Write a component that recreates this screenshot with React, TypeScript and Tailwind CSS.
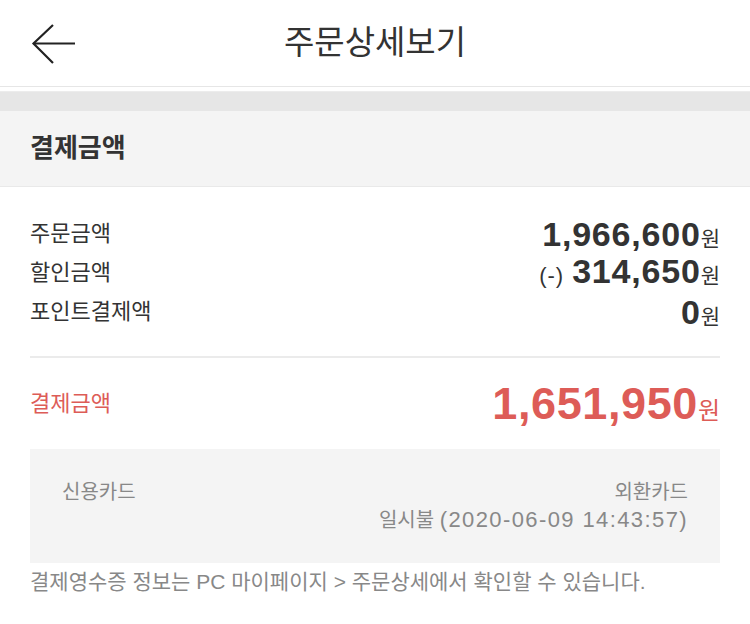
import React from "react";

const font = { fontFamily: '"Liberation Sans", "Noto Sans CJK KR", sans-serif' };

function Row({ label, value, prefix }: { label: string; value: string; prefix?: string }) {
  return (
    <div className="flex h-[39px] items-center justify-between">
      <span className="text-[22px] text-[#333]">{label}</span>
      <span className="flex items-baseline text-[#333]">
        {prefix && <span className="mr-[8px] text-[22px] tracking-[1px]">{prefix}</span>}
        <span className="text-[34px] font-bold leading-none tracking-[0.8px]">{value}</span>
        <span className="text-[21px] leading-none">원</span>
      </span>
    </div>
  );
}

export default function App() {
  return (
    <div className="h-[624px] w-[750px] overflow-hidden bg-white" style={font}>
      <header className="relative flex h-[87px] items-center justify-center border-b border-[#e6e6e6]">
        <svg
          className="absolute left-[31px] top-[23px]"
          width="46"
          height="42"
          viewBox="0 0 46 42"
          fill="none"
          stroke="#222"
          strokeWidth="2.2"
        >
          <path d="M22 2 L2.5 20.5 L22 40" />
          <path d="M2.5 20.5 H44" />
        </svg>
        <h1 className="text-[33px] font-normal text-[#333]">주문상세보기</h1>
      </header>
      <div className="h-[4px] bg-white" />
      <div className="h-[20px] border-t border-[#ececec] bg-[#e6e6e6]" />
      <div className="flex h-[76px] items-center border-b border-[#e9e9e9] bg-[#f4f4f4] px-[30px]">
        <h2 className="text-[26px] font-bold text-[#333]">결제금액</h2>
      </div>
      <div className="px-[30px] pt-[27px]">
        <Row label="주문금액" value="1,966,600" />
        <Row label="할인금액" value="314,650" prefix="(-)" />
        <Row label="포인트결제액" value="0" />
        <div className="mt-[25px] h-[2px] bg-[#ebebeb]" />
        <div className="mt-[15px] flex h-[60px] items-center justify-between text-[#dd5c57]">
          <span className="text-[22px]">결제금액</span>
          <span className="flex items-baseline">
            <span className="text-[45px] font-bold leading-none tracking-[0.6px]">1,651,950</span>
            <span className="text-[24px] leading-none">원</span>
          </span>
        </div>
        <div className="mt-[16px] flex h-[114px] justify-between bg-[#f4f4f4] px-[32px] py-[29px] text-[20px] leading-[28px] text-[#888]">
          <span>신용카드</span>
          <div className="text-right">
            <div>외환카드</div>
            <div>
              일시불 <span className="text-[22px] tracking-[1.4px]">(2020-06-09 14:43:57)</span>
            </div>
          </div>
        </div>
        <p className="mt-[5px] text-[21px] leading-[28px] text-[#888]">
          결제영수증 정보는 PC 마이페이지 &gt; 주문상세에서 확인할 수 있습니다.
        </p>
      </div>
    </div>
  );
}
